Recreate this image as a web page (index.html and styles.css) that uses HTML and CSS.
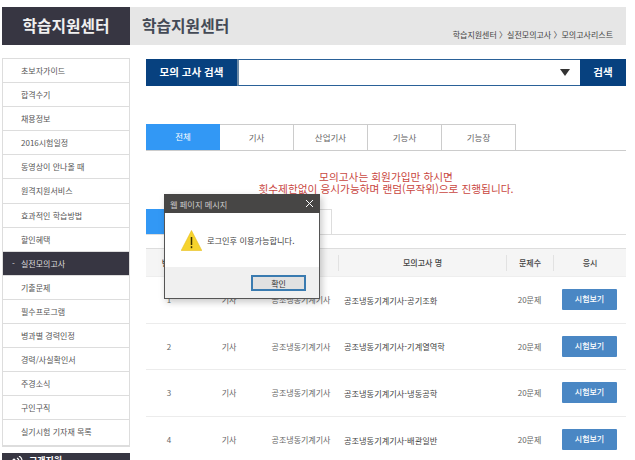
FILE: index.html
```html
<!DOCTYPE html>
<html lang="ko">
<head>
<meta charset="utf-8">
<title>학습지원센터</title>
<link rel="stylesheet" href="styles.css">
</head>
<body>
<div class="page">
  <header class="top">
    <div class="brand">학습지원센터</div>
    <div class="headline">
      <h1>학습지원센터</h1>
      <div class="crumbs">학습지원센터 〉실전모의고사 〉모의고사리스트</div>
    </div>
  </header>
  <div class="body">
    <aside class="side">
      <ul class="menu">
        <li>초보자가이드</li>
        <li>합격수기</li>
        <li>채용정보</li>
        <li>2016시험일정</li>
        <li>동영상이 안나올 때</li>
        <li>원격지원서비스</li>
        <li>효과적인 학습방법</li>
        <li>할인혜택</li>
        <li class="on"><span class="dash">-</span>실전모의고사</li>
        <li>기출문제</li>
        <li>필수프로그램</li>
        <li>병과별 경력인정</li>
        <li>경력/사실확인서</li>
        <li>주경소식</li>
        <li>구인구직</li>
        <li>실기시험 기자재 목록</li>
      </ul>
      <div class="support">
        <svg class="support-ico" width="13" height="9" viewBox="0 0 13 9"><path d="M1 6l3-3 2 2-3 3zM7 2a4 4 0 0 1 2 4M9 0a6 6 0 0 1 3 6" fill="none" stroke="#fff" stroke-width="1.2"/></svg>
        고객지원
      </div>
    </aside>
    <main class="main">
      <div class="search">
        <div class="search-label">모의 고사 검색</div>
        <div class="search-box"><span class="arrow"></span></div>
        <div class="search-btn">검색</div>
      </div>
      <div class="tabs">
        <div class="tab active">전체</div>
        <div class="tab">기사</div>
        <div class="tab">산업기사</div>
        <div class="tab">기능사</div>
        <div class="tab">기능장</div>
      </div>
      <p class="notice">모의고사는 회원가입만 하시면<br>횟수제한없이 응시가능하며 랜덤(무작위)으로 진행됩니다.</p>
      <div class="subtabs">
        <div class="subtab active">전체</div>
        <div class="subtab">공조</div>
      </div>
      <div class="table">
        <div class="row head">
          <div>번호</div><div>유형</div><div class="dept">자격증</div><div class="sep">모의고사 명</div><div class="sep">문제수</div><div class="sep">응시</div>
        </div>
        <div class="row">
          <div>1</div><div>기사</div><div class="dept">공조냉동기계기사</div><div class="name">공조냉동기계기사-공기조화</div><div>20문제</div><div><span class="btn">시험보기</span></div>
        </div>
        <div class="row">
          <div>2</div><div>기사</div><div class="dept">공조냉동기계기사</div><div class="name">공조냉동기계기사-기계열역학</div><div>20문제</div><div><span class="btn">시험보기</span></div>
        </div>
        <div class="row">
          <div>3</div><div>기사</div><div class="dept">공조냉동기계기사</div><div class="name">공조냉동기계기사-냉동공학</div><div>20문제</div><div><span class="btn">시험보기</span></div>
        </div>
        <div class="row">
          <div>4</div><div>기사</div><div class="dept">공조냉동기계기사</div><div class="name">공조냉동기계기사-배관일반</div><div>20문제</div><div><span class="btn">시험보기</span></div>
        </div>
      </div>
    </main>
  </div>
  <div class="dialog">
    <div class="dialog-title"><span>웹 페이지 메시지</span>
      <svg width="9" height="9" viewBox="0 0 9 9"><path d="M1 1l7 7M8 1l-7 7" stroke="#fff" stroke-width="1"/></svg>
    </div>
    <div class="dialog-body">
      <svg class="warn" width="21" height="21" viewBox="0 0 21 21"><path d="M10.500 .5L20.800 20.500H.2z" fill="#f6d32d" stroke="#e8c020" stroke-width=".6"/><path d="M10.500 7v8" stroke="#3a3000" stroke-width="1.500"/><path d="M10.500 16.200v2" stroke="#3a3000" stroke-width="1.500"/></svg>
      <span>로그인후 이용가능합니다.</span>
    </div>
    <div class="dialog-foot"><span class="ok">확인</span></div>
  </div>
</div>
</body>
</html>
```
FILE: styles.css
```css
* { box-sizing: border-box; }
html, body { margin: 0; padding: 0; }
body {
  width: 635px;
  height: 460px;
  overflow: hidden;
  background: #fff;
  font-family: "Noto Sans CJK KR", "Noto Sans", sans-serif;
  font-size: 8px;
  color: #555;
}
.page { position: relative; width: 635px; height: 460px; padding: 7px 9px 0 2px; overflow: hidden; }
.top { display: flex; height: 38px; }
.brand {
  width: 128px;
  background: #373642;
  color: #f0f0f0;
  font-size: 15.800px;
  font-weight: 700;
  line-height: 37px;
  text-align: center;
}
.headline {
  flex: 1;
  background: #e6e6e6;
  display: flex;
  justify-content: space-between;
  padding: 0 13px 0 12px;
}
.headline h1 { margin: 0; font-size: 15.800px; font-weight: 700; line-height: 37px; color: #444a55; }
.crumbs { font-size: 8px; line-height: 12px; padding-top: 22px; color: #444; }
.body { display: flex; margin-top: 13px; }
.side { width: 128px; flex: none; }
.menu { list-style: none; margin: 0; padding: 0; border: 1px solid #ddd; border-bottom-width: 2px; }
.menu li {
  height: 24.100px;
  line-height: 23px;
  padding-left: 18px;
  border-bottom: 1px solid #ddd;
  font-size: 8px;
  color: #555;
  white-space: nowrap;
}
.menu li:last-child { border-bottom: 0; }
.menu li.on { background: #373642; color: #ddd; position: relative; }
.dash { position: absolute; left: 9px; }
.support {
  margin-top: 6px;
  height: 24px;
  background: #373642;
  color: #fff;
  font-size: 9px;
  font-weight: 700;
  line-height: 15px;
  padding-left: 8px;
  display: flex;
  gap: 6px;
}
.support-ico { margin-top: 3px; }
.main { width: 480px; margin-left: 16px; }
.search { display: flex; height: 27px; margin-top: 1px; }
.search-label {
  width: 91px;
  background: #07417f;
  color: #fff;
  font-size: 10.500px;
  font-weight: 700;
  line-height: 26px;
  text-align: center;
}
.search-box {
  flex: 1;
  border: 1px solid #2a6198;
  border-width: 1px 0 1px 2px;
  border-left-color: #6d8aa5;
  position: relative;
}
.arrow {
  position: absolute;
  right: 10px;
  top: 9px;
  border-style: solid;
  border-width: 7px 5px 0;
  border-color: #333 transparent transparent;
}
.search-btn {
  width: 46px;
  background: #07417f;
  color: #fff;
  font-size: 10.500px;
  font-weight: 700;
  line-height: 26px;
  text-align: center;
}
.tabs { display: flex; height: 27px; margin-top: 38px; border-bottom: 1px solid #ccc; }
.tab {
  width: 74px;
  border: 1px solid #ccc;
  border-left: 0;
  border-bottom: 0;
  text-align: center;
  line-height: 24px;
  font-size: 8.500px;
  color: #666;
}
.tab.active { background: #3298f5; color: #fff; border: 0; }
.notice {
  margin: 20px 0 0;
  height: 24px;
  text-align: center;
  color: #c9473f;
  font-size: 10.700px;
  line-height: 12px;
  white-space: nowrap;
}
.subtabs { display: flex; height: 26px; margin-top: 14px; border-bottom: 1px solid #ddd; }
.subtab { width: 93px; border: 1px solid #ddd; border-left: 0; border-bottom: 0; text-align: center; line-height: 25px; }
.subtab.active { background: #3298f5; color: #fff; border: 0; }
.table { margin-top: 13px; }
.row {
  display: grid;
  grid-template-columns: 46px 74px 72px 168px 47px 73px;
  height: 46.500px;
  align-items: center;
  text-align: center;
  border-bottom: 1px solid #ececec;
  color: #666;
  font-size: 8px;
}
.row:last-child { border-bottom: 0; }
.row.head {
  height: 29px;
  background: #f5f5f5;
  border-top: 1px solid #ddd;
  border-bottom: 1px solid #eee;
  color: #444;
  font-weight: 500;
}
.dept { white-space: nowrap; padding-right: 2px; }
.sep { border-left: 1px solid #e2e2e2; line-height: 16px; }
.name { text-align: left; padding-left: 6px; color: #444; font-size: 8.200px; white-space: nowrap; }
.btn {
  display: inline-block;
  width: 55px;
  height: 21px;
  line-height: 20px;
  background: #4a87c4;
  color: #fff;
  font-size: 8px;
  font-weight: 500;
  border-radius: 1px;
}
.dialog {
  position: absolute;
  left: 164px;
  top: 194px;
  width: 156px;
  height: 105px;
  border: 1px solid #555;
  border-top: 0;
  background: #fff;
  box-shadow: 2px 3px 7px rgba(0,0,0,.22);
}
.dialog-title {
  height: 19px;
  background: #474645;
  color: #ccc;
  margin: 0 -1px;
  padding: 0 6px 0 6px;
  display: flex;
  align-items: center;
  justify-content: space-between;
  font-size: 8.200px;
}
.dialog-body {
  height: 54px;
  padding: 17px 0 0 16px;
  display: flex;
  align-items: flex-start;
  gap: 5px;
  color: #444;
  font-size: 8.200px;
}
.dialog-body span { line-height: 14px; margin-top: 3px; }
.dialog-foot { height: 31px; background: #f0f0f0; padding: 8px 13px 0 0; text-align: right; }
.ok {
  display: inline-block;
  width: 55px;
  height: 16px;
  line-height: 13px;
  border: 2px solid #3a7bb0;
  background: #e1e1e1;
  text-align: center;
  color: #333;
  font-size: 8px;
  vertical-align: top;
}
```
